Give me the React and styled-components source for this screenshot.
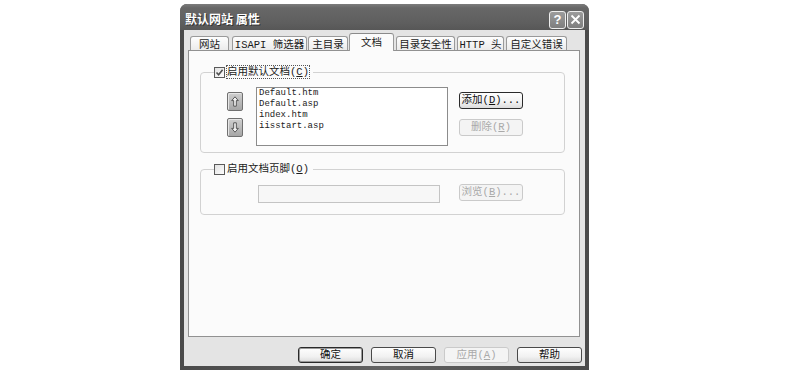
import React from 'react'
import styled, { createGlobalStyle } from 'styled-components'

const GlobalStyle = createGlobalStyle`
  html, body {
    margin: 0;
    padding: 0;
    background: #fff;
  }
  body {
    font-family: "Liberation Mono", "Noto Sans CJK SC", monospace;
  }
`

const tabs = [
  { label: '网站', w: 39, gap: 0 },
  { label: 'ISAPI 筛选器', w: 75, gap: 3 },
  { label: '主目录', w: 40, gap: 1 },
  { label: '文档', w: 45, gap: 1, active: true },
  { label: '目录安全性', w: 59, gap: 2 },
  { label: 'HTTP 头', w: 47, gap: 2 },
  { label: '自定义错误', w: 61, gap: 2 },
]

const files = ['Default.htm', 'Default.asp', 'index.htm', 'iisstart.asp']

const ArrowIcon = ({ down }) => (
  <svg width="8" height="11" viewBox="0 0 8 11" style={{ transform: down ? 'rotate(180deg)' : 'none' }}>
    <path d="M4 0.8 L7.3 4.6 L5.3 4.6 L5.3 10.2 L2.7 10.2 L2.7 4.6 L0.7 4.6 Z" fill="#f4f4f4" stroke="#4a4a4a" strokeWidth="0.9" />
  </svg>
)

const CheckMark = () => (
  <svg width="9" height="9" viewBox="0 0 9 9">
    <path d="M1.5 4.5 L3.6 6.7 L7.6 1.8" fill="none" stroke="#505050" strokeWidth="1.6" />
  </svg>
)

const App = () => {
  return (
    <Page>
      <GlobalStyle />
      <Window>
        <TitleBar>
          <Title>默认网站 属性</Title>
          <CaptionButtons>
            <CaptionButton>?</CaptionButton>
            <CaptionButton>
              <svg width="11" height="11" viewBox="0 0 11 11">
                <path d="M1.5 1.5 L9.5 9.5 M9.5 1.5 L1.5 9.5" stroke="#fff" strokeWidth="1.8" />
              </svg>
            </CaptionButton>
          </CaptionButtons>
        </TitleBar>
        <Body>
          <TabRow>
            {tabs.map(t => (
              <Tab key={t.label} $w={t.w} $gap={t.gap} $active={t.active}>{t.label}</Tab>
            ))}
          </TabRow>
          <Panel>
            <Group>
              <Legend>
                <CheckBox><CheckMark /></CheckBox>
                <FocusLabel>启用默认文档(<u>C</u>)</FocusLabel>
              </Legend>
              <DocRow>
                <ArrowColumn>
                  <ArrowButton><ArrowIcon /></ArrowButton>
                  <ArrowButton><ArrowIcon down /></ArrowButton>
                </ArrowColumn>
                <ListBox>
                  {files.map(f => <ListItem key={f}>{f}</ListItem>)}
                </ListBox>
                <ButtonColumn>
                  <Button $w={64} $h={17} $focus>添加(<u>D</u>)...</Button>
                  <Button $w={64} $h={17} disabled>删除(<u>R</u>)</Button>
                </ButtonColumn>
              </DocRow>
            </Group>
            <Group>
              <Legend>
                <CheckBox />
                <Label>启用文档页脚(<u>O</u>)</Label>
              </Legend>
              <FooterRow>
                <TextBox />
                <Button $w={64} $h={17} disabled>浏览(<u>B</u>)...</Button>
              </FooterRow>
            </Group>
          </Panel>
          <DialogButtons>
            <Button $w={65} $h={16} $default>确定</Button>
            <Button $w={65} $h={16}>取消</Button>
            <Button $w={65} $h={16} disabled>应用(<u>A</u>)</Button>
            <Button $w={65} $h={16}>帮助</Button>
          </DialogButtons>
        </Body>
      </Window>
    </Page>
  )
}

export default App

const Page = styled.div`
  width: 789px;
  height: 374px;
  padding: 4px 0 0 180px;
  box-sizing: border-box;
  background: #fff;
`

const Window = styled.div`
  width: 409px;
  height: 366px;
  display: flex;
  flex-direction: column;
  border-radius: 7px 7px 0 0;
  overflow: hidden;
  background: linear-gradient(90deg, #4a4a4a, #626262 50%, #4a4a4a);
`

const TitleBar = styled.div`
  height: 26px;
  flex: none;
  display: flex;
  align-items: center;
  justify-content: space-between;
  padding: 0 5px 0 5px;
  background: linear-gradient(#7c7c7c, #676767 15%, #5f5f5f 70%, #575757);
`

const Title = styled.div`
  font-family: "Noto Sans CJK SC", sans-serif;
  font-size: 12px;
  font-weight: 700;
  color: #fff;
  text-shadow: 1px 1px 0 #333;
  margin-top: 2px;
`

const CaptionButtons = styled.div`
  display: flex;
  gap: 1px;
  margin-top: 5px;
`

const CaptionButton = styled.div`
  width: 17px;
  height: 18px;
  box-sizing: border-box;
  border: 1px solid #eee;
  border-radius: 3px;
  background: linear-gradient(#9c9c9c, #7e7e7e);
  color: #fff;
  display: flex;
  align-items: center;
  justify-content: center;
  font-family: "Liberation Sans", sans-serif;
  font-weight: 700;
  font-size: 13px;
`

const Body = styled.div`
  flex: 1;
  margin: 0 4px 4px;
  padding: 3px 5px 0 4px;
  background: #e4e4e4;
  display: flex;
  flex-direction: column;
`

const TabRow = styled.div`
  height: 17px;
  display: flex;
  align-items: flex-end;
  padding-left: 2px;
  position: relative;
  z-index: 1;
`

const Tab = styled.div`
  box-sizing: border-box;
  width: ${p => p.$w}px;
  margin-left: ${p => p.$gap}px;
  height: ${p => (p.$active ? 18 : 14)}px;
  margin-bottom: ${p => (p.$active ? -1 : 0)}px;
  padding-bottom: ${p => (p.$active ? 2 : 0)}px;
  border: 1px solid #9a9a9a;
  border-bottom: none;
  border-top-color: ${p => (p.$active ? '#8a8a8a' : '#9a9a9a')};
  border-radius: 3px 3px 0 0;
  background: ${p => (p.$active ? '#fbfbfb' : 'linear-gradient(#fefefe, #ebebeb)')};
  display: flex;
  align-items: center;
  justify-content: center;
  font-size: 10.5px;
  color: #1a1a1a;
  white-space: nowrap;
`

const Panel = styled.div`
  height: 287px;
  box-sizing: border-box;
  border: 1px solid #919191;
  background: #fbfbfb;
  padding: 15px 14px 0 11px;
`

const Group = styled.fieldset`
  margin: 0;
  padding: 0;
  min-width: 0;
  border: 1px solid #d2d2d2;
  border-radius: 4px;

  & + & {
    margin-top: 10px;
  }
`

const Legend = styled.legend`
  margin-left: 13px;
  padding: 0 4px 0 0;
  height: 12px;
  display: flex;
  align-items: center;
  gap: 2px;
  font-size: 10.5px;
  color: #1a1a1a;
`

const CheckBox = styled.span`
  width: 11px;
  height: 11px;
  box-sizing: border-box;
  border: 1px solid #5a5a5a;
  background: linear-gradient(135deg, #e2e2e2, #fdfdfd);
  display: flex;
  align-items: center;
  justify-content: center;
`

const Label = styled.span`
  line-height: 12px;
  white-space: nowrap;
`

const FocusLabel = styled(Label)`
  outline: 1px dotted #555;
  outline-offset: 0;
`

const DocRow = styled.div`
  display: flex;
  align-items: flex-start;
  padding: 9px 0 6px 26px;
`

const ArrowColumn = styled.div`
  display: flex;
  flex-direction: column;
  gap: 7px;
  margin-top: 5px;
`

const ArrowButton = styled.div`
  width: 16px;
  height: 19px;
  box-sizing: border-box;
  border: 1px solid #707070;
  border-radius: 2px;
  background: linear-gradient(#cfcfcf, #a6a6a6);
  box-shadow: inset 1px 1px 0 #e6e6e6;
  display: flex;
  align-items: center;
  justify-content: center;
`

const ListBox = styled.div`
  width: 192px;
  height: 59px;
  box-sizing: border-box;
  margin-left: 13px;
  padding: 0 2px;
  border: 1px solid #8c8c8c;
  background: #fff;
`

const ListItem = styled.div`
  font-family: "Liberation Mono", monospace;
  font-size: 9px;
  line-height: 11px;
  color: #222;
`

const ButtonColumn = styled.div`
  display: flex;
  flex-direction: column;
  gap: 10px;
  margin: 5px 0 0 11px;
`

const Button = styled.button`
  width: ${p => p.$w}px;
  height: ${p => p.$h}px;
  box-sizing: border-box;
  padding: 0;
  font-family: "Liberation Mono", "Noto Sans CJK SC", monospace;
  font-size: 10.5px;
  line-height: 1;
  color: #111;
  border: 1px solid ${p => (p.$default || p.$focus ? '#2a2a2a' : '#4a4a4a')};
  border-radius: 3px;
  background: linear-gradient(#fefefe, #f2f2f2 60%, #dcdcdc);
  box-shadow: ${p => (p.$default ? 'inset 0 0 0 1px #9a9a9a' : 'none')};
  display: flex;
  align-items: center;
  justify-content: center;
  white-space: nowrap;

  &:disabled {
    color: #a9a9a9;
    border-color: #cacaca;
    background: #f4f4f4;
  }
`

const FooterRow = styled.div`
  display: flex;
  align-items: flex-start;
  gap: 19px;
  padding: 9px 0 11px 57px;
`

const TextBox = styled.div`
  width: 182px;
  height: 18px;
  box-sizing: border-box;
  margin-top: 1px;
  border: 1px solid #c4c4c4;
  background: #f7f7f7;
`

const DialogButtons = styled.div`
  display: flex;
  justify-content: flex-end;
  gap: 8px;
  margin: 10px -2px 0 0;
`
